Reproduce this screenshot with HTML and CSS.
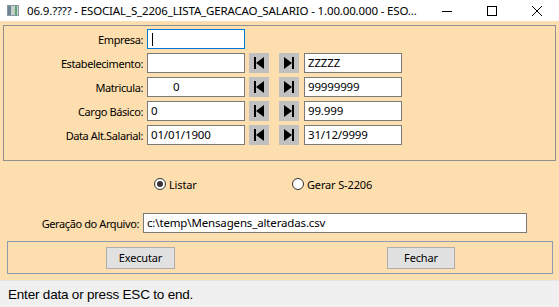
FILE: index.html
```
<!DOCTYPE html>
<html lang="pt">
<head>
    <meta charset="UTF-8">
    <title>ESOCIAL_S_2206_LISTA_GERACAO_SALARIO</title>
    <link rel="stylesheet" href="styles.css">
</head>
<body>
    <div class="window">
        <div class="title-bar">
            <span class="app-icon"></span>
            <span class="title-text">06.9.???? - ESOCIAL_S_2206_LISTA_GERACAO_SALARIO - 1.00.00.000 - ESO...</span>
            <div class="controls">
                <span class="ctl">
                    <svg width="10" height="10" viewBox="0 0 10 10"><path d="M0 5.5h10" stroke="#000" stroke-width="1"/></svg>
                </span>
                <span class="ctl">
                    <svg width="10" height="10" viewBox="0 0 10 10"><rect x="0.5" y="0.5" width="9" height="9" fill="none" stroke="#000" stroke-width="1"/></svg>
                </span>
                <span class="ctl">
                    <svg width="10" height="10" viewBox="0 0 10 10"><path d="M0 0L10 10M10 0L0 10" stroke="#000" stroke-width="1"/></svg>
                </span>
            </div>
        </div>

        <div class="main">
            <div class="filter-panel">
                <div class="row">
                    <label class="lbl">Empresa:</label>
                    <div class="field focused"><span class="caret"></span></div>
                </div>
                <div class="row">
                    <label class="lbl">Estabelecimento:</label>
                    <div class="field"></div>
                    <span class="nav-btn"><svg width="20" height="20" viewBox="0 0 20 20"><rect x="5" y="4" width="2" height="12"/><path d="M7 10L15 4V16Z"/></svg></span>
                    <span class="nav-btn second"><svg width="20" height="20" viewBox="0 0 20 20"><path d="M5 4L13 10L5 16Z"/><rect x="13" y="4" width="2" height="12"/></svg></span>
                    <div class="field to">ZZZZZ</div>
                </div>
                <div class="row">
                    <label class="lbl">Matricula:</label>
                    <div class="field num">0</div>
                    <span class="nav-btn"><svg width="20" height="20" viewBox="0 0 20 20"><rect x="5" y="4" width="2" height="12"/><path d="M7 10L15 4V16Z"/></svg></span>
                    <span class="nav-btn second"><svg width="20" height="20" viewBox="0 0 20 20"><path d="M5 4L13 10L5 16Z"/><rect x="13" y="4" width="2" height="12"/></svg></span>
                    <div class="field to">99999999</div>
                </div>
                <div class="row">
                    <label class="lbl">Cargo Básico:</label>
                    <div class="field">0</div>
                    <span class="nav-btn"><svg width="20" height="20" viewBox="0 0 20 20"><rect x="5" y="4" width="2" height="12"/><path d="M7 10L15 4V16Z"/></svg></span>
                    <span class="nav-btn second"><svg width="20" height="20" viewBox="0 0 20 20"><path d="M5 4L13 10L5 16Z"/><rect x="13" y="4" width="2" height="12"/></svg></span>
                    <div class="field to">99.999</div>
                </div>
                <div class="row">
                    <label class="lbl">Data Alt.Salarial:</label>
                    <div class="field">01/01/1900</div>
                    <span class="nav-btn"><svg width="20" height="20" viewBox="0 0 20 20"><rect x="5" y="4" width="2" height="12"/><path d="M7 10L15 4V16Z"/></svg></span>
                    <span class="nav-btn second"><svg width="20" height="20" viewBox="0 0 20 20"><path d="M5 4L13 10L5 16Z"/><rect x="13" y="4" width="2" height="12"/></svg></span>
                    <div class="field to">31/12/9999</div>
                </div>
            </div>

            <div class="radio-row">
                <span class="radio-item listar"><span class="radio checked"></span>Listar</span>
                <span class="radio-item"><span class="radio"></span>Gerar S-2206</span>
            </div>

            <div class="file-row">
                <label class="lbl">Geração do Arquivo:</label>
                <div class="field wide">c:\temp\Mensagens_alteradas.csv</div>
            </div>

            <div class="button-panel">
                <button class="btn exec">Executar</button>
                <button class="btn close">Fechar</button>
            </div>
        </div>

        <div class="status-bar">Enter data or press ESC to end.</div>
    </div>
</body>
</html>
```

FILE: styles.css
```
:root {
    --peach: #fddeae;
    --panel-border: #8f8f8f;
    --field-border: #7a7a7a;
    --nav-grey: #c0c0c0;
}

* {
    margin: 0;
    padding: 0;
    box-sizing: border-box;
}

body {
    font-family: 'Noto Sans', 'DejaVu Sans', sans-serif;
    font-size: 11px;
    letter-spacing: -0.15px;
    color: #000;
    background: #fff;
    overflow: hidden;
}

.window {
    width: 559px;
    height: 307px;
    display: flex;
    flex-direction: column;
}

/* title bar */
.title-bar {
    height: 21px;
    display: flex;
    align-items: center;
    background: #fff;
}

.app-icon {
    flex-shrink: 0;
    width: 12px;
    height: 11px;
    margin-left: 7px;
    margin-right: 8px;
    background: linear-gradient(90deg, #6f8294 0 3px, #c3d0cc 3px 7px, #5aa56a 7px 9px, #cfd8e0 9px);
    border: 1px solid #8a99a8;
}

.title-text {
    font-size: 11.5px;
    letter-spacing: -0.15px;
    white-space: nowrap;
    overflow: hidden;
    flex: 1;
    color: #000;
}

.controls {
    display: flex;
    flex-shrink: 0;
}

.ctl {
    width: 45px;
    height: 21px;
    display: flex;
    align-items: center;
    justify-content: center;
}

/* main peach area */
.main {
    height: 259px;
    background: var(--peach);
    display: flex;
    flex-direction: column;
}

.filter-panel {
    margin: 4px 3px 0 3px;
    height: 136px;
    border: 1px solid var(--panel-border);
    padding-top: 3px;
    display: flex;
    flex-direction: column;
    gap: 4px;
}

.row {
    display: flex;
    align-items: center;
    height: 20px;
}

.lbl {
    width: 140px;
    text-align: right;
    padding-right: 1px;
    margin-right: 3px;
    white-space: nowrap;
    letter-spacing: -0.4px;
}

.field {
    width: 98px;
    height: 20px;
    background: #fff;
    border: 1px solid var(--field-border);
    padding-left: 3px;
    line-height: 18px;
    font-size: 11.5px;
    white-space: nowrap;
}

.field.focused {
    border-color: #0078d7;
}

.caret {
    display: inline-block;
    width: 1px;
    height: 13px;
    background: #000;
    vertical-align: middle;
    margin-left: 1px;
}

.field.num {
    padding-left: 25px;
}

.nav-btn {
    width: 20px;
    height: 20px;
    background: var(--nav-grey);
    margin-left: 4px;
    display: block;
}

.nav-btn.second {
    margin-left: 10px;
}

.nav-btn svg {
    display: block;
    fill: #000;
}

.field.to {
    margin-left: 5px;
}

/* radio options */
.radio-row {
    margin-top: 13px;
    height: 20px;
    display: flex;
    align-items: center;
    padding-left: 154px;
}

.radio-item {
    display: flex;
    align-items: center;
    gap: 3px;
}

.radio-item.listar {
    width: 138px;
}

.radio {
    width: 12px;
    height: 12px;
    border-radius: 50%;
    border: 1px solid #333;
    background: #fff;
    position: relative;
}

.radio.checked::after {
    content: '';
    position: absolute;
    left: 2px;
    top: 2px;
    width: 6px;
    height: 6px;
    border-radius: 50%;
    background: #333;
}

/* output file */
.file-row {
    margin-top: 19px;
    display: flex;
    align-items: center;
    height: 20px;
}

.field.wide {
    width: 384px;
}

/* bottom buttons */
.button-panel {
    margin: 8px 6px 0 7px;
    height: 33px;
    border: 1px solid #8e9aae;
    display: flex;
    align-items: center;
}

.btn {
    height: 22px;
    background: #e1e1e1;
    border: 1px solid #adadad;
    font-family: 'Noto Sans', 'DejaVu Sans', sans-serif;
    font-size: 11px;
    letter-spacing: -0.15px;
    color: #000;
}

.btn.exec {
    width: 69px;
    margin-left: 98px;
}

.btn.close {
    width: 68px;
    margin-left: 212px;
}

/* status bar */
.status-bar {
    flex: 1;
    background: #f0f0f0;
    border-top: 1px solid #e4e4e4;
    padding-left: 8px;
    display: flex;
    align-items: center;
    font-family: 'Liberation Sans', Arial, sans-serif;
    font-size: 13.5px;
    letter-spacing: -0.2px;
}
```
